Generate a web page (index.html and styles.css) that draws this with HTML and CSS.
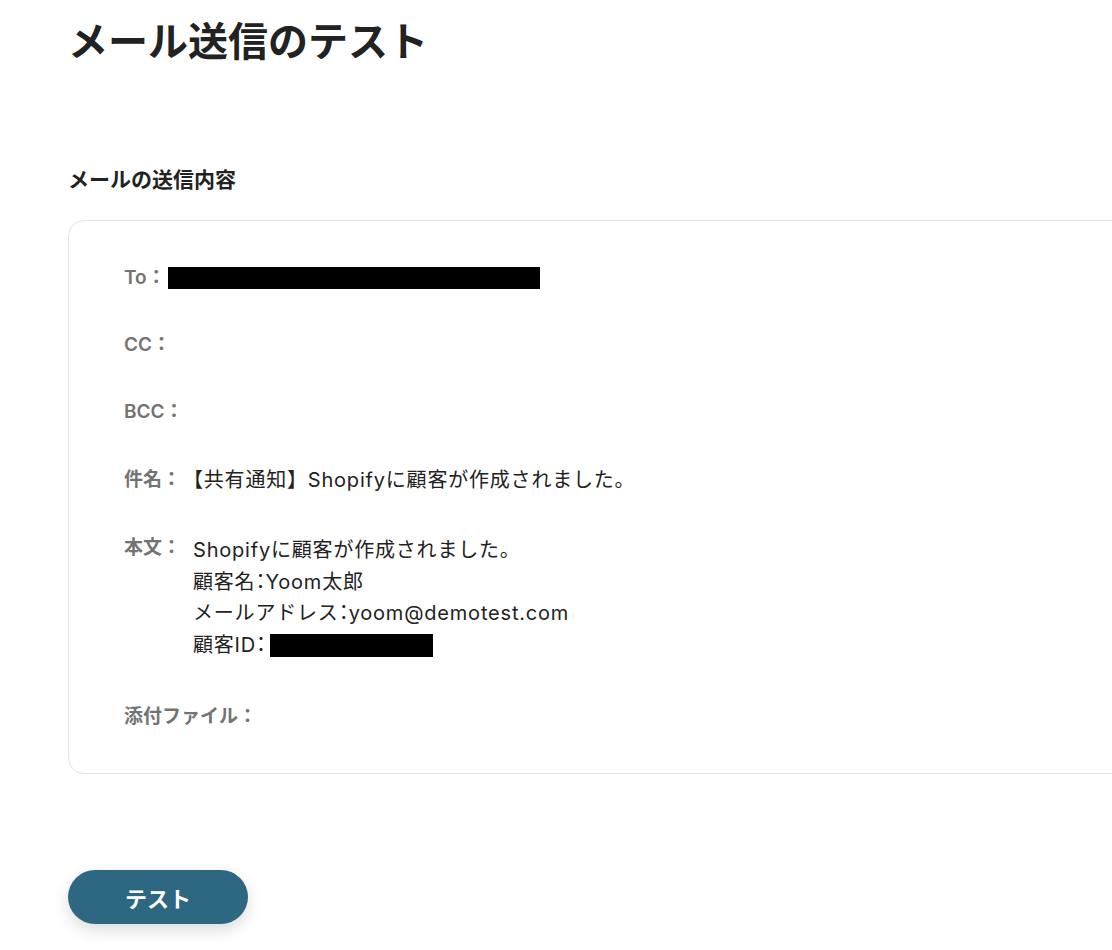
FILE: index.html
```html
<html lang="ja">
<head>
    <meta charset="UTF-8">
    <meta name="viewport" content="width=device-width, initial-scale=1.0">
    <title>メール送信のテスト</title>
    <link rel="stylesheet" href="styles.css">
</head>
<body>
    <div id="page">
        <h1 class="page-title">メール送信のテスト</h1>

        <h2 class="section-title">メールの送信内容</h2>

        <div class="mail-card">
            <div class="mail-row">
                <span class="mail-label">To：</span>
                <span class="mail-value"><span class="redact redact-to"></span></span>
            </div>
            <div class="mail-row">
                <span class="mail-label">CC：</span>
            </div>
            <div class="mail-row">
                <span class="mail-label">BCC：</span>
            </div>
            <div class="mail-row subject-row">
                <span class="mail-label">件名：</span>
                <span class="mail-value subject">【共有通知】Shopifyに顧客が作成されました。</span>
            </div>
            <div class="mail-row body-row">
                <span class="mail-label">本文：</span>
                <div class="mail-value body-text">
                    <p>Shopifyに顧客が作成されました。</p>
                    <p>顧客名<span class="colon">：</span>Yoom太郎</p>
                    <p>メールアドレス<span class="colon">：</span>yoom@demotest.com</p>
                    <p>顧客ID<span class="colon">：</span><span class="redact redact-id"></span></p>
                </div>
            </div>
            <div class="mail-row attach-row">
                <span class="mail-label">添付ファイル：</span>
            </div>
        </div>

        <button id="test-button">テスト</button>
    </div>
</body>
</html>
```

FILE: styles.css
```css
  html, body {
      margin: 0;
      padding: 0;
      background-color: #fff;
      overflow-x: hidden;
  }
  body {
      font-family: Inter, "Noto Sans CJK JP", sans-serif;
      color: #222;
  }
  #page {
      padding: 0 0 0 68px;
  }
  .page-title {
      margin: 18px 0 0;
      font-size: 40px;
      line-height: 48px;
      font-weight: 700;
      color: #222;
  }
  .section-title {
      margin: 100px 0 26px;
      font-size: 21px;
      line-height: 28px;
      font-weight: 700;
      color: #222;
  }
  .mail-card {
      width: 1080px;
      box-sizing: border-box;
      border: 1px solid #e2e2e2;
      border-radius: 16px;
      padding: 41px 54px 40px;
      display: flex;
      flex-direction: column;
      gap: 35px;
  }
  .mail-row {
      display: flex;
      align-items: flex-start;
      line-height: 32px;
  }
  .mail-label {
      color: #737373;
      font-size: 19px;
      font-weight: 600;
      margin-left: 1px;
  }
  .mail-value {
      color: #222;
      font-size: 20px;
      letter-spacing: 0.8px;
  }
  .mail-value.subject {
      margin-left: 2px;
  }
  .subject-row {
      margin-top: 1px;
  }
  .body-row {
      margin-top: 1px;
  }
  .body-text {
      margin-left: 12px;
      margin-top: 3px;
  }
  .body-text p {
      margin: 0;
      line-height: 31.7px;
  }
  .colon {
      font-feature-settings: "halt";
      letter-spacing: 0;
  }
  .attach-row {
      margin-top: 4px;
  }
  .redact {
      background-color: #000;
  }
  .redact-to {
      display: block;
      width: 372px;
      height: 22px;
      margin-top: 5px;
      margin-left: 2px;
  }
  .redact-id {
      display: inline-block;
      vertical-align: top;
      width: 163px;
      height: 23px;
      margin-top: 4px;
      margin-left: 4px;
  }
  #test-button {
      display: block;
      margin-top: 96px;
      width: 180px;
      height: 54px;
      border: none;
      border-radius: 27px;
      background-color: #2e6781;
      color: #fff;
      font-family: Inter, "Noto Sans CJK JP", sans-serif;
      font-size: 22px;
      font-weight: 700;
      cursor: pointer;
      box-shadow: 0 6px 16px rgba(0, 0, 0, 0.14);
  }
```
